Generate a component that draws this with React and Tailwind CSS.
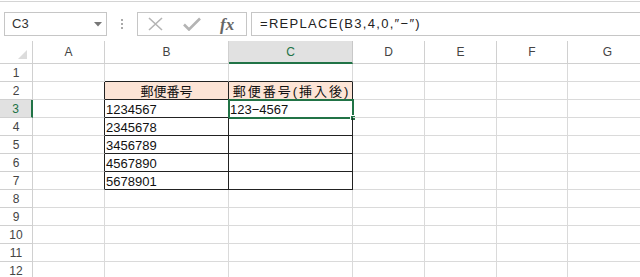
const COLS = [
  { key: 'A', w: 'w-[72px]' },
  { key: 'B', w: 'w-[124px]' },
  { key: 'C', w: 'w-[124px]' },
  { key: 'D', w: 'w-[72px]' },
  { key: 'E', w: 'w-[72px]' },
  { key: 'F', w: 'w-[71px]' },
  { key: 'G', w: 'w-[80px]' },
]

const DATA = {
  2: { B: '郵便番号', C: '郵便番号(挿入後)' },
  3: { B: '1234567', C: '123−4567' },
  4: { B: '2345678' },
  5: { B: '3456789' },
  6: { B: '4567890' },
  7: { B: '5678901' },
}

function Cell({ row, col }) {
  const inTable = row >= 2 && row <= 7 && (col.key === 'B' || col.key === 'C')
  const isHead = row === 2 && inTable
  const text = DATA[row]?.[col.key]

  let cls = `${col.w} h-[18px] shrink-0 border-r border-b relative flex items-center overflow-visible whitespace-nowrap `
  // black edges around B2:C7, grey grid elsewhere
  if (inTable || (col.key === 'A' && row >= 2 && row <= 7)) cls += 'border-r-[#222] '
  else cls += 'border-r-[#dadada] '
  if (inTable || (row === 1 && (col.key === 'B' || col.key === 'C'))) cls += 'border-b-[#222] '
  else cls += 'border-b-[#dadada] '
  if (isHead) cls += 'bg-[#fce4d6] justify-center '
  else cls += 'justify-start pl-[1px] '

  const selected = row === 3 && col.key === 'C'
  const spaced = row === 2 && col.key === 'C'

  return (
    <div className={cls}>
      {text && (
        <span className={`text-[13px] leading-none text-[#111] pt-[2px] ${spaced ? 'tracking-[2px] pl-[2px]' : ''}`}>{text}</span>
      )}
      {selected && (
        <>
          <div className="absolute left-[-1px] top-[-1px] right-[-2px] bottom-[-2px] border-2 border-[#217346] pointer-events-none" />
          <div className="absolute right-[-4px] bottom-[-4px] w-[6px] h-[6px] bg-[#217346] border border-white" />
        </>
      )}
    </div>
  )
}

export default function App() {
  const rows = Array.from({ length: 12 }, (_, i) => i + 1)

  return (
    <div className="w-[640px] h-[277px] overflow-hidden bg-white" style={{ fontFamily: '"Liberation Sans", "Noto Sans CJK JP", sans-serif' }}>
      {/* Formula bar */}
      <div className="h-[40px] border-t border-[#d4d4d4] mt-[1px] flex items-start pt-[10px]">
        <div className="ml-[4px] w-[103px] h-[24px] border border-[#c6c6c6] flex items-center justify-between pl-[7px] pr-[4px]">
          <span className="text-[13px] text-[#333]">C3</span>
          <svg width="8" height="5" viewBox="0 0 8 5"><path d="M0 0h8L4 4.5z" fill="#777" /></svg>
        </div>
        <div className="ml-[12px] w-[6px] h-[24px] flex flex-col items-center justify-center gap-[2px]">
          <span className="w-[2px] h-[2px] bg-[#aaa]" />
          <span className="w-[2px] h-[2px] bg-[#aaa]" />
          <span className="w-[2px] h-[2px] bg-[#aaa]" />
        </div>
        <div className="ml-[12px] w-[110px] h-[24px] border border-[#c6c6c6] flex items-center">
          <svg className="ml-[10px]" width="15" height="14" viewBox="0 0 15 14">
            <path d="M1 1L14 13M14 1L1 13" stroke="#b4b4b4" strokeWidth="1.6" fill="none" />
          </svg>
          <svg className="ml-[20px]" width="18" height="14" viewBox="0 0 18 14">
            <path d="M1 7.5L6 12.5L17 1.5" stroke="#b4b4b4" strokeWidth="2.6" fill="none" />
          </svg>
          <span className="ml-[19px] text-[17px] leading-none italic font-bold text-[#666]" style={{ fontFamily: '"Liberation Serif", serif' }}>fx</span>
        </div>
        <div className="ml-[4px] flex-1 h-[24px] border border-r-0 border-[#c6c6c6] flex items-center pl-[8px]">
          <span className="text-[13px] text-[#222] tracking-[1.3px]">=REPLACE(B3,4,0,″−″)</span>
        </div>
      </div>

      {/* Column headers */}
      <div className="flex h-[23px]">
        <div className="w-[33px] shrink-0 border-r border-b border-[#d0d0d0] relative">
          <svg className="absolute right-[5px] bottom-[4px]" width="9" height="9" viewBox="0 0 9 9"><path d="M9 0V9H0z" fill="#dcdcdc" /></svg>
        </div>
        {COLS.map(c => (
          <div
            key={c.key}
            className={`${c.w} shrink-0 border-r flex items-center justify-center text-[12px] ${c.key === 'C' ? 'bg-[#e1e1e1] border-b-2 border-b-[#217346] border-r-[#c8c8c8] text-[#217346]' : 'border-b border-[#d0d0d0] text-[#444]'}`}
          >
            {c.key}
          </div>
        ))}
      </div>

      {/* Rows */}
      {rows.map(r => (
        <div key={r} className="flex">
          <div className={`w-[33px] h-[18px] shrink-0 border-b border-[#d0d0d0] flex items-center justify-center text-[12px] ${r === 3 ? 'bg-[#e1e1e1] border-r-2 border-r-[#217346] text-[#217346]' : 'border-r text-[#444]'}`}>
            {r}
          </div>
          {COLS.map(c => <Cell key={c.key} row={r} col={c} />)}
        </div>
      ))}
    </div>
  )
}
